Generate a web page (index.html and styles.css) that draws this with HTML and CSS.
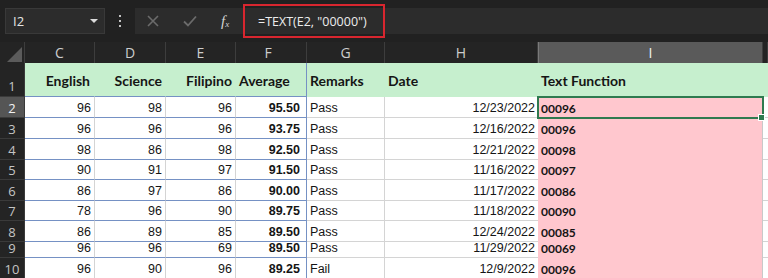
FILE: index.html
```html
<!DOCTYPE html>
<html lang="en">
<head>
    <meta charset="UTF-8">
    <title>TEXT function</title>
    <link rel="stylesheet" href="styles.css">
</head>
<body>
    <div class="toolbar">
        <div class="namebox">
            <span>I2</span>
            <span class="caret"></span>
        </div>
        <div class="dots"><span></span><span></span><span></span></div>
        <div class="fbar">
            <svg class="ico-x" width="12" height="12" viewBox="0 0 12 12">
                <path d="M1 1 L11 11 M11 1 L1 11" stroke="#6b6b6b" stroke-width="1.6" fill="none"/>
            </svg>
            <svg class="ico-ok" width="14" height="12" viewBox="0 0 14 12">
                <path d="M1 6.5 L5 10.5 L13 1.5" stroke="#6b6b6b" stroke-width="1.8" fill="none"/>
            </svg>
            <span class="fx">f<sub>x</sub></span>
            <span class="formula">=TEXT(E2, "00000")</span>
        </div>
        <div class="callout"></div>
    </div>

    <div class="sheet">
        <div class="row colhead">
            <div class="corner">
                <svg width="15" height="15" viewBox="0 0 15 15"><polygon points="15,0 15,15 0,15" fill="#5b5b5b"/></svg>
            </div>
            <div>C</div><div>D</div><div>E</div><div>F</div><div>G</div><div>H</div><div class="active">I</div><div></div>
        </div>

        <div class="row titles">
            <div class="rh">1</div>
            <div class="pr4">English</div>
            <div>Science</div>
            <div>Filipino</div>
            <div class="txt">Average</div>
            <div class="txt">Remarks</div>
            <div class="txt">Date</div>
            <div class="txt">Text Function</div>
            <div></div>
        </div>

        <div class="row h21">
            <div class="rh picked">2</div>
            <div>96</div><div>98</div><div>96</div><div class="avg">95.50</div>
            <div class="txt">Pass</div><div>12/23/2022</div><div class="code sel">00096</div><div></div>
        </div>
        <div class="row h21">
            <div class="rh">3</div>
            <div>96</div><div>96</div><div>96</div><div class="avg">93.75</div>
            <div class="txt">Pass</div><div>12/16/2022</div><div class="code">00096</div><div></div>
        </div>
        <div class="row h21">
            <div class="rh">4</div>
            <div>98</div><div>86</div><div>98</div><div class="avg">92.50</div>
            <div class="txt">Pass</div><div>12/21/2022</div><div class="code">00098</div><div></div>
        </div>
        <div class="row h20">
            <div class="rh">5</div>
            <div>90</div><div>91</div><div>97</div><div class="avg">91.50</div>
            <div class="txt">Pass</div><div>11/16/2022</div><div class="code">00097</div><div></div>
        </div>
        <div class="row h21">
            <div class="rh">6</div>
            <div>86</div><div>97</div><div>86</div><div class="avg">90.00</div>
            <div class="txt">Pass</div><div>11/17/2022</div><div class="code">00086</div><div></div>
        </div>
        <div class="row h20">
            <div class="rh">7</div>
            <div>78</div><div>96</div><div>90</div><div class="avg">89.75</div>
            <div class="txt">Pass</div><div>11/18/2022</div><div class="code">00090</div><div></div>
        </div>
        <div class="row h21">
            <div class="rh">8</div>
            <div>86</div><div>89</div><div>85</div><div class="avg">89.50</div>
            <div class="txt">Pass</div><div>12/24/2022</div><div class="code">00085</div><div></div>
        </div>
        <div class="row h16">
            <div class="rh">9</div>
            <div>96</div><div>96</div><div>69</div><div class="avg">89.50</div>
            <div class="txt">Pass</div><div>11/29/2022</div><div class="code">00069</div><div></div>
        </div>
        <div class="row h21">
            <div class="rh">10</div>
            <div>96</div><div>90</div><div>96</div><div class="avg">89.25</div>
            <div class="txt">Fail</div><div>12/9/2022</div><div class="code">00096</div><div></div>
        </div>
    </div>
</body>
</html>
```

FILE: styles.css
```css
body {
    margin: 0;
    background-color: #212121;
    font-family: "Liberation Sans", Arial, sans-serif;
    overflow: hidden;
}

/* formula bar */
.toolbar {
    position: relative;
    height: 42px;
    padding-top: 8px;
    box-sizing: border-box;
    display: flex;
    align-items: flex-start;
}
.namebox {
    margin-left: 5px;
    width: 100px;
    height: 26px;
    box-sizing: border-box;
    background-color: #2c2c2c;
    border: 1px solid #393939;
    display: flex;
    align-items: center;
    justify-content: space-between;
    padding: 0 6px 0 7px;
    color: #e4e4e4;
    font-family: "Open Sans", sans-serif;
    font-size: 13px;
}
.caret {
    width: 0;
    height: 0;
    border-left: 4px solid transparent;
    border-right: 4px solid transparent;
    border-top: 4px solid #dcdcdc;
}
.dots {
    width: 30px;
    height: 26px;
    display: flex;
    flex-direction: column;
    align-items: center;
    justify-content: center;
    gap: 3px;
}
.dots span {
    width: 2px;
    height: 2px;
    background-color: #c2c2c2;
}
.fbar {
    flex: 1;
    height: 26px;
    background-color: #2c2c2c;
    display: flex;
    align-items: center;
    padding-left: 12px;
}
.ico-x {
    margin-right: 24px;
}
.ico-ok {
    margin-right: 24px;
}
.fx {
    width: 12px;
    margin-right: 25px;
    color: #d4d4d4;
    font-family: "Liberation Serif", serif;
    font-style: italic;
    font-size: 15px;
    line-height: 1;
}
.fx sub {
    font-size: 9px;
    vertical-align: -1px;
}
.formula {
    color: #ececec;
    font-family: "Open Sans", sans-serif;
    font-size: 12.5px;
}
.callout {
    position: absolute;
    left: 243px;
    top: 4px;
    width: 142px;
    height: 34px;
    box-sizing: border-box;
    border: 2px solid #d8262f;
}

/* grid */
.row {
    display: flex;
    height: 21px;
}
.row > div {
    box-sizing: border-box;
    flex: none;
    display: flex;
    align-items: flex-end;
    justify-content: flex-end;
    padding: 0 3px 1px;
    border-right: 1px solid #d4d4d4;
    border-bottom: 1px solid #d4d4d4;
    background-color: #fff;
    color: #151515;
    font-size: 12.5px;
    line-height: 15px;
    white-space: nowrap;
}
.row > div:nth-child(1) { width: 25px; }
.row > div:nth-child(2) { width: 70px; }
.row > div:nth-child(3) { width: 71px; }
.row > div:nth-child(4) { width: 70px; }
.row > div:nth-child(5) { width: 71px; }
.row > div:nth-child(6) { width: 78px; }
.row > div:nth-child(7) { width: 153px; border-right: none; }
.row > div:nth-child(8) { width: 225px; }
.row > div:nth-child(9) { flex: 1; border-right: none; }

/* table data block C:F */
.row > div:nth-child(2),
.row > div:nth-child(3),
.row > div:nth-child(4),
.row > div:nth-child(5) {
    border-bottom-color: #7591c4;
}
.row > div:nth-child(5) {
    border-right-color: #7591c4;
    padding-right: 6px;
}

.h21 { height: 21px; }
.h20 { height: 20px; }
.h16 { height: 16px; }

.txt {
    justify-content: flex-start !important;
}
.avg {
    font-weight: bold;
}
.row > .code {
    justify-content: flex-start;
    padding-bottom: 2px;
    background-color: #ffc7ce;
    border-bottom: none;
    border-right-color: #c9c9c9;
    font-family: Lato, sans-serif;
    font-weight: 700;
    font-size: 12px;
    line-height: 14px;
}
.row > .sel {
    position: relative;
    outline: 2px solid #2f7a4f;
    outline-offset: -1px;
    z-index: 1;
}
.sel::after {
    content: "";
    position: absolute;
    right: -3px;
    bottom: -3px;
    width: 5px;
    height: 5px;
    background-color: #2f7a4f;
    border: 1px solid #fff;
}

/* row headers */
.row > .rh {
    justify-content: center;
    padding: 0 0 3px;
    background-color: #242424;
    border-right: 1px solid #3a3a3a;
    border-bottom: 1px solid #3a3a3a;
    color: #c4c4c4;
    font-family: "Open Sans", sans-serif;
    font-size: 13px;
    line-height: 12px;
}
.row > .picked {
    background-color: #555;
    color: #f2f2f2;
}

/* column letters */
.colhead > div {
    justify-content: center;
    align-items: center;
    padding: 0;
    background-color: #242424;
    border-right-color: #3d3d3d;
    border-bottom: none;
    color: #cdcdcd;
    font-family: "Open Sans", sans-serif;
    font-size: 14px;
}
.colhead > div:nth-child(n) {
    border-bottom: none;
    border-right: 1px solid #3d3d3d;
}
.colhead > .corner {
    align-items: flex-end;
    justify-content: flex-end;
    padding: 0 2px 1px 0;
}
.colhead > .active {
    background-color: #5a5a5a;
    border-left: 1px solid #7a7a7a;
    border-right: 1px solid #7a7a7a;
    border-bottom: 2px solid #2f7a4f;
    color: #f2f2f2;
}

/* header titles */
.titles {
    height: 34px;
}
.titles > div {
    background-color: #c6efce;
    border-right-color: transparent;
    border-bottom-color: transparent;
    padding-bottom: 7px;
    font-family: Lato, sans-serif;
    font-weight: 700;
    font-size: 14px;
    line-height: 17px;
}
.titles > div:nth-child(n) {
    background-color: #c6efce;
    border-right-color: transparent;
    border-bottom-color: transparent;
}
.titles > div:nth-child(2),
.titles > div:nth-child(3),
.titles > div:nth-child(4),
.titles > div:nth-child(5) {
    border-bottom-color: #7591c4;
}
.titles > div:nth-child(5) {
    border-right-color: #7591c4;
}
.titles > .pr4 {
    padding-right: 4px;
}
.titles > .rh:nth-child(1) {
    background-color: #242424;
    border-right-color: #3a3a3a;
    border-bottom-color: #3a3a3a;
    font-family: "Open Sans", sans-serif;
    font-weight: 400;
    font-size: 13px;
    line-height: 12px;
    padding-bottom: 4px;
}
```
